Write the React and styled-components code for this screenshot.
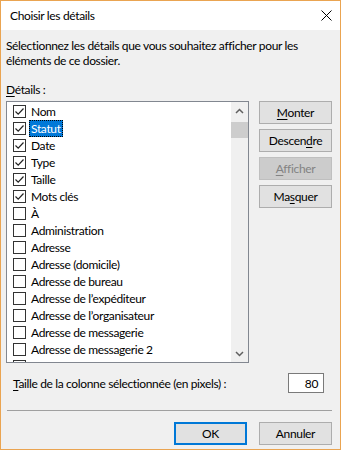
import React from "react";
import styled, { createGlobalStyle } from "styled-components";

const Global = createGlobalStyle`
  html, body { margin: 0; padding: 0; background: #f0f0f0; }
  * { box-sizing: border-box; }
`;

const Window = styled.div`
  width: 341px;
  height: 450px;
  border: 1px solid #eaa451;
  display: flex;
  flex-direction: column;
  background: #f0f0f0;
  font-family: Lato, "Noto Sans", "Liberation Sans", sans-serif;
  font-size: 12px;
  letter-spacing: -0.35px;
  color: #000;
  overflow: hidden;
`;

const TitleBar = styled.div`
  height: 29px;
  background: #fff;
  display: flex;
  align-items: center;
  justify-content: space-between;
  padding: 0 8px 0 9px;
  flex-shrink: 0;
`;

const Title = styled.span`
  font-size: 12px;
`;

const Close = styled.svg`
  width: 11px;
  height: 11px;
`;

const Content = styled.div`
  flex: 1;
  display: flex;
  flex-direction: column;
  padding: 8px 8px 0 5px;
`;

const Paragraph = styled.p`
  margin: 0;
  line-height: 15px;
  white-space: nowrap;
`;

const Label = styled.div`
  margin-top: 14px;
  line-height: 15px;
  height: 15px;
`;

const Key = styled.span`
  text-decoration: underline;
  text-underline-offset: 2px;
`;

const MainRow = styled.div`
  display: flex;
  gap: 10px;
  margin-top: 4px;
`;

const ListBox = styled.div`
  width: 244px;
  height: 262px;
  border: 1px solid #828790;
  background: #fff;
  display: flex;
  overflow: hidden;
`;

const Items = styled.div`
  flex: 1;
  padding-top: 1px;
  overflow: hidden;
`;

const Item = styled.div`
  height: 17px;
  display: flex;
  align-items: center;
  padding-left: 6px;
`;

const Box = styled.span`
  width: 13px;
  height: 13px;
  border: 1px solid #333;
  background: #fff;
  display: flex;
  align-items: center;
  justify-content: center;
  flex-shrink: 0;
`;

const ItemText = styled.span`
  margin-left: 3px;
  padding: 0 2px;
  line-height: 17px;
  height: 17px;
  white-space: nowrap;
  ${(p) =>
    p.$selected
      ? `background: #0078d7; color: #fff; outline: 1px dotted #000; outline-offset: -1px;`
      : ``}
`;

const ScrollBar = styled.div`
  width: 17px;
  background: #f0f0f0;
  display: flex;
  flex-direction: column;
  flex-shrink: 0;
`;

const Arrow = styled.div`
  height: 17px;
  display: flex;
  align-items: center;
  justify-content: center;
  flex-shrink: 0;
`;

const Track = styled.div`
  flex: 1;
`;

const Thumb = styled.div`
  height: 16px;
  margin-top: 3px;
  background: #cdcdcd;
`;

const ButtonColumn = styled.div`
  display: flex;
  flex-direction: column;
  gap: 5px;
`;

const Button = styled.div`
  width: 73px;
  height: 23px;
  display: flex;
  align-items: center;
  justify-content: center;
  flex-shrink: 0;
  background: ${(p) => (p.$disabled ? "#cccccc" : "#e1e1e1")};
  border: ${(p) => (p.$default ? "2px solid #0078d7" : p.$disabled ? "1px solid #bfbfbf" : "1px solid #adadad")};
  color: ${(p) => (p.$disabled ? "#838383" : "#000")};
`;

const SizeRow = styled.div`
  display: flex;
  align-items: center;
  justify-content: space-between;
  margin-top: 10px;
  padding-left: 7px;
  padding-right: 8px;
`;

const NumberBox = styled.div`
  width: 36px;
  height: 20px;
  border: 1px solid #7a7a7a;
  background: #fff;
  display: flex;
  align-items: center;
  justify-content: flex-end;
  padding-right: 5px;
`;

const Separator = styled.div`
  height: 1px;
  background: #a0a0a0;
  margin-top: 17px;
  margin-left: 1px;
`;

const Footer = styled.div`
  display: flex;
  justify-content: flex-end;
  gap: 12px;
  margin-top: 11px;
`;

const Check = () => (
  <svg width="11" height="11" viewBox="0 0 11 11">
    <path d="M1.5 5.5 L4.2 8.2 L9.5 2.5" fill="none" stroke="#222" strokeWidth="1.2" />
  </svg>
);

const items = [
  ["Nom", true],
  ["Statut", true, true],
  ["Date", true],
  ["Type", true],
  ["Taille", true],
  ["Mots clés", true],
  ["À", false],
  ["Administration", false],
  ["Adresse", false],
  ["Adresse (domicile)", false],
  ["Adresse de bureau", false],
  ["Adresse de l’expéditeur", false],
  ["Adresse de l’organisateur", false],
  ["Adresse de messagerie", false],
  ["Adresse de messagerie 2", false],
  ["Adresse de messagerie 3", false],
];

export default function App() {
  return (
    <>
      <Global />
      <Window>
        <TitleBar>
          <Title>Choisir les détails</Title>
          <Close viewBox="0 0 11 11">
            <path d="M0.5 0.5 L10.5 10.5 M10.5 0.5 L0.5 10.5" stroke="#000" strokeWidth="1" />
          </Close>
        </TitleBar>
        <Content>
          <Paragraph>
            Sélectionnez les détails que vous souhaitez afficher pour les
            <br />
            éléments de ce dossier.
          </Paragraph>
          <Label>
            <Key>D</Key>étails :
          </Label>
          <MainRow>
            <ListBox>
              <Items>
                {items.map(([name, checked, selected]) => (
                  <Item key={name}>
                    <Box>{checked && <Check />}</Box>
                    <ItemText $selected={selected}>{name}</ItemText>
                  </Item>
                ))}
              </Items>
              <ScrollBar>
                <Arrow>
                  <svg width="9" height="6" viewBox="0 0 9 6">
                    <path d="M1 5 L4.5 1.5 L8 5" fill="none" stroke="#606060" strokeWidth="1.5" />
                  </svg>
                </Arrow>
                <Track>
                  <Thumb />
                </Track>
                <Arrow>
                  <svg width="9" height="6" viewBox="0 0 9 6">
                    <path d="M1 1 L4.5 4.5 L8 1" fill="none" stroke="#606060" strokeWidth="1.5" />
                  </svg>
                </Arrow>
              </ScrollBar>
            </ListBox>
            <ButtonColumn>
              <Button>
                <span><Key>M</Key>onter</span>
              </Button>
              <Button>
                <span>Descen<Key>d</Key>re</span>
              </Button>
              <Button $disabled>
                <span><Key>A</Key>fficher</span>
              </Button>
              <Button>
                <span>Ma<Key>s</Key>quer</span>
              </Button>
            </ButtonColumn>
          </MainRow>
          <SizeRow>
            <span><Key>T</Key>aille de la colonne sélectionnée (en pixels) :</span>
            <NumberBox>80</NumberBox>
          </SizeRow>
          <Separator />
          <Footer>
            <Button $default>OK</Button>
            <Button>Annuler</Button>
          </Footer>
        </Content>
      </Window>
    </>
  );
}
